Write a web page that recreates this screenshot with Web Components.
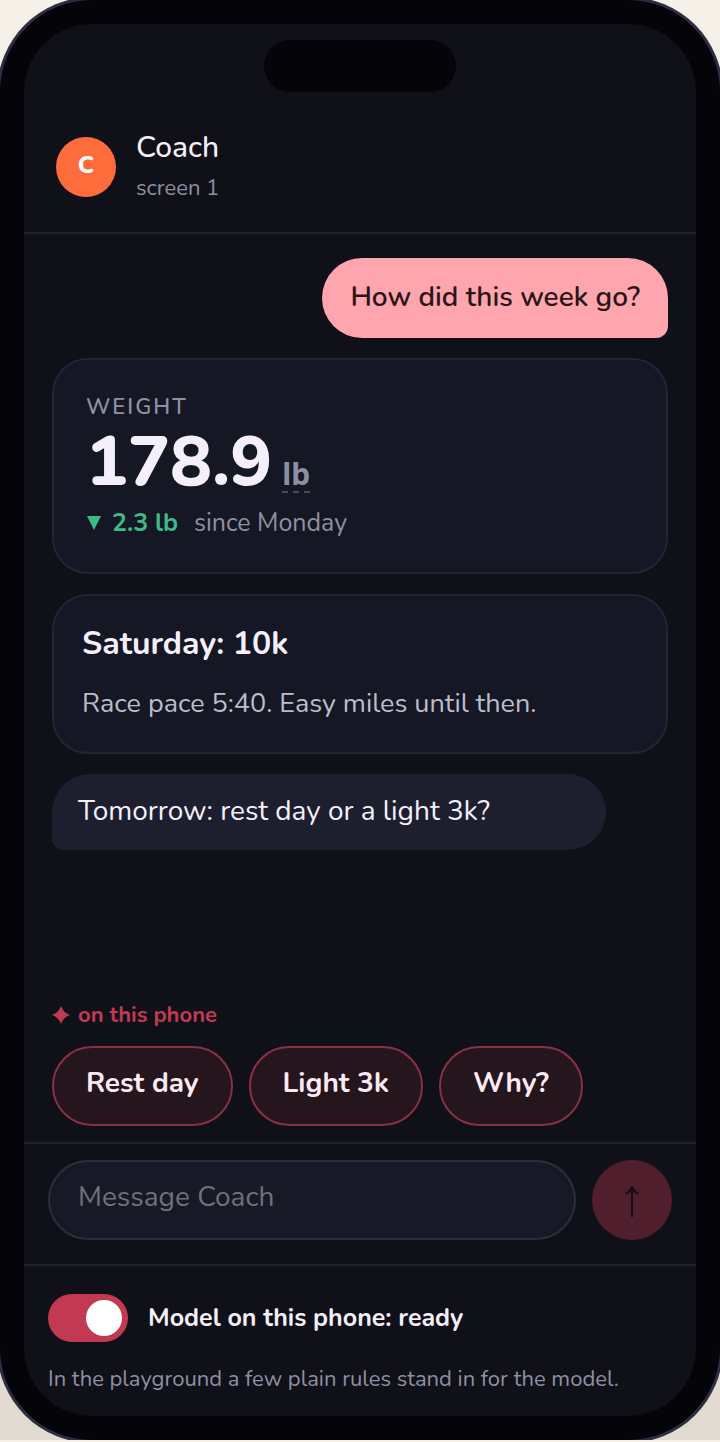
<!DOCTYPE html>
<html lang="en">
<head>
<meta charset="utf-8">
<meta name="viewport" content="width=device-width, initial-scale=1">
<title>Coach</title>
<style>
    :root {
        --bezel: #040409;
        --ring: #2f2d42;
        --screen: #101118;
        --line: #20212d;
        --card: #151725;
        --card-line: #232536;
        --bubble: #1d1e2e;
        --user: #ffa5ae;
        --accent: #c23a52;
        --text: #f4effa;
        --muted: #8f8fa2;
        --good: #3dba86;
    }

    body {
        margin: 0;
        background: linear-gradient(#f5f0e8, #e0dad1);
        color: var(--text);
        font-family: Nunito, Lato, "Noto Sans", sans-serif;
        font-size: 28px;
        line-height: 40px;
    }
</style>
</head>
<body>
<phone-frame>
    <chat-header slot="header" initial="C">
        Coach
        <span slot="status">screen 1</span>
    </chat-header>

    <chat-bubble from="user">How did this week go?</chat-bubble>
    <metric-card unit="lb">
        Weight
        <span slot="value">178.9</span>
        <span slot="delta">2.3 lb</span>
        <span slot="since">since Monday</span>
    </metric-card>
    <note-card>
        <span slot="title">Saturday: 10k</span>
        Race pace 5:40. Easy miles until then.
    </note-card>
    <chat-bubble from="coach">Tomorrow: rest day or a light 3k?</chat-bubble>

    <quick-replies slot="footer">
        <span slot="source">on this phone</span>
        <reply-chip>Rest day</reply-chip>
        <reply-chip>Light 3k</reply-chip>
        <reply-chip>Why?</reply-chip>
    </quick-replies>
    <message-composer slot="footer" placeholder="Message Coach"></message-composer>
    <model-switch slot="footer">
        Model on this phone: ready
        <span slot="note">In the playground a few plain rules stand in for the model.</span>
    </model-switch>
</phone-frame>

<script>
    // attach a shadow root filled with the given markup
    function render(el, html) {
        const template = document.createElement('template');
        template.innerHTML = html;
        el.attachShadow({ mode: 'open' }).appendChild(template.content.cloneNode(true));
    }

    class PhoneFrame extends HTMLElement {
        constructor() {
            super();
            render(this, `
                <style>
                    :host {
                        display: flex;
                        box-sizing: border-box;
                        min-height: calc(100vh - 2px);
                        padding: 24px;
                        background: var(--bezel);
                        border-radius: 92px;
                        box-shadow: 0 0 0 3px var(--ring);
                    }
                    .screen {
                        position: relative;
                        flex: 1;
                        display: flex;
                        flex-direction: column;
                        min-width: 0;
                        background: var(--screen);
                        border-radius: 68px;
                        overflow: hidden;
                    }
                    .island {
                        position: absolute;
                        top: 16px;
                        left: 50%;
                        width: 192px;
                        height: 52px;
                        margin-left: -96px;
                        border-radius: 26px;
                        background: var(--bezel);
                    }
                    main {
                        flex: 1;
                        display: flex;
                        flex-direction: column;
                        align-items: stretch;
                        gap: 20px;
                        padding: 24px 28px;
                    }
                </style>
                <div class="screen">
                    <div class="island"></div>
                    <slot name="header"></slot>
                    <main><slot></slot></main>
                    <slot name="footer"></slot>
                </div>
            `);
        }
    }

    class ChatHeader extends HTMLElement {
        constructor() {
            super();
            render(this, `
                <style>
                    :host { display: block; }
                    header {
                        display: flex;
                        align-items: center;
                        gap: 20px;
                        padding: 104px 32px 26px;
                        border-bottom: 2px solid var(--line);
                    }
                    .avatar {
                        width: 60px;
                        height: 60px;
                        border-radius: 50%;
                        background: #ff6c3c;
                        color: #fff;
                        font-size: 24px;
                        font-weight: 800;
                        line-height: 56px;
                        text-align: center;
                    }
                    .name {
                        font-size: 30px;
                        font-weight: 500;
                        line-height: 40px;
                    }
                    .status {
                        color: var(--muted);
                        font-size: 22px;
                        line-height: 40px;
                    }
                    .who { margin-bottom: -2px; }
                </style>
                <header>
                    <div class="avatar"></div>
                    <div class="who">
                        <div class="name"><slot></slot></div>
                        <div class="status"><slot name="status"></slot></div>
                    </div>
                </header>
            `);
        }

        connectedCallback() {
            this.shadowRoot.querySelector('.avatar').textContent = this.getAttribute('initial');
        }
    }

    class ChatBubble extends HTMLElement {
        constructor() {
            super();
            render(this, `
                <style>
                    :host {
                        display: block;
                        box-sizing: border-box;
                        max-width: 90%;
                        border-radius: 40px;
                        line-height: 38px;
                    }
                    :host([from="user"]) {
                        align-self: flex-end;
                        padding: 20px 28px 22px;
                        border-bottom-right-radius: 12px;
                        background: var(--user);
                        color: #2b1519;
                        font-weight: 600;
                    }
                    :host([from="coach"]) {
                        width: 90%;
                        padding: 18px 26px 20px;
                        border-bottom-left-radius: 12px;
                        background: var(--bubble);
                    }
                </style>
                <slot></slot>
            `);
        }
    }

    class MetricCard extends HTMLElement {
        constructor() {
            super();
            render(this, `
                <style>
                    :host {
                        display: block;
                        padding: 30px 32px 26px;
                        border: 2px solid var(--card-line);
                        border-radius: 36px;
                        background: var(--card);
                        color: var(--muted);
                    }
                    .label {
                        font-size: 22px;
                        font-weight: 600;
                        letter-spacing: 2px;
                        line-height: 34px;
                        text-transform: uppercase;
                    }
                    .reading {
                        display: flex;
                        align-items: baseline;
                        gap: 10px;
                        line-height: 76px;
                    }
                    .value {
                        color: var(--text);
                        font-size: 70px;
                        font-weight: 800;
                    }
                    .unit {
                        border-bottom: 2px dashed #474859;
                        font-family: "Noto Sans", sans-serif;
                        font-size: 30px;
                        font-weight: 700;
                        line-height: 34px;
                    }
                    .trend {
                        display: flex;
                        align-items: center;
                        font-size: 25px;
                        line-height: 46px;
                    }
                    svg { margin-right: 10px; }
                    .delta {
                        margin-right: 16px;
                        color: var(--good);
                        font-weight: 700;
                    }
                </style>
                <div class="label"><slot></slot></div>
                <div class="reading">
                    <span class="value"><slot name="value"></slot></span>
                    <span class="unit"></span>
                </div>
                <div class="trend">
                    <svg width="16" height="16" viewBox="0 0 16 16" fill="#3dba86" aria-hidden="true"><path d="M1 1h14L8 15z"/></svg>
                    <span class="delta"><slot name="delta"></slot></span>
                    <slot name="since"></slot>
                </div>
            `);
        }

        connectedCallback() {
            this.shadowRoot.querySelector('.unit').textContent = this.getAttribute('unit');
        }
    }

    class NoteCard extends HTMLElement {
        constructor() {
            super();
            render(this, `
                <style>
                    :host {
                        display: block;
                        padding: 26px 28px 28px;
                        border: 2px solid var(--card-line);
                        border-radius: 36px;
                        background: var(--card);
                    }
                    .title {
                        margin-bottom: 18px;
                        font-size: 32px;
                        font-weight: 700;
                        line-height: 44px;
                    }
                    .body {
                        color: #bdbccb;
                        font-size: 27px;
                    }
                </style>
                <div class="title"><slot name="title"></slot></div>
                <div class="body"><slot></slot></div>
            `);
        }
    }

    class QuickReplies extends HTMLElement {
        constructor() {
            super();
            render(this, `
                <style>
                    :host {
                        display: block;
                        padding: 0 28px 16px;
                    }
                    .source {
                        display: flex;
                        align-items: center;
                        gap: 8px;
                        margin-bottom: 14px;
                        color: var(--accent);
                        font-size: 22px;
                        font-weight: 700;
                        line-height: 34px;
                    }
                    .chips {
                        display: flex;
                        flex-wrap: wrap;
                        gap: 16px;
                    }
                </style>
                <div class="source">
                    <svg width="18" height="18" viewBox="0 0 18 18" fill="currentColor" aria-hidden="true"><path d="M9 0Q11.300 6.700 18 9Q11.300 11.300 9 18Q6.700 11.300 0 9Q6.700 6.700 9 0z"/></svg>
                    <slot name="source"></slot>
                </div>
                <div class="chips"><slot></slot></div>
            `);
        }
    }

    class ReplyChip extends HTMLElement {
        constructor() {
            super();
            render(this, `
                <style>
                    :host { display: block; }
                    button {
                        padding: 16px 32px 22px;
                        border: 2px solid #8d2f44;
                        border-radius: 40px;
                        background: #25151d;
                        color: #fbeaf3;
                        font: inherit;
                        font-weight: 700;
                        line-height: 38px;
                        cursor: pointer;
                    }
                </style>
                <button type="button"><slot></slot></button>
            `);
        }
    }

    class MessageComposer extends HTMLElement {
        constructor() {
            super();
            render(this, `
                <style>
                    :host { display: block; }
                    form {
                        display: flex;
                        gap: 16px;
                        padding: 16px 24px 24px;
                        border-top: 2px solid var(--line);
                    }
                    input {
                        flex: 1;
                        box-sizing: border-box;
                        min-width: 0;
                        height: 80px;
                        padding: 0 28px 6px;
                        border: 2px solid #2b2f3c;
                        border-radius: 40px;
                        background: #171a26;
                        color: var(--text);
                        font: inherit;
                    }
                    input::placeholder { color: #6f707b; opacity: 1; }
                    button {
                        display: flex;
                        align-items: center;
                        justify-content: center;
                        width: 80px;
                        height: 80px;
                        padding: 0;
                        border: 0;
                        border-radius: 50%;
                        background: var(--accent);
                        color: #000;
                    }
                    button:disabled {
                        background: #4f1f2e;
                        color: #161016;
                    }
                </style>
                <form>
                    <input type="text" name="message" autocomplete="off">
                    <button type="submit" aria-label="Send" disabled>
                        <svg width="16" height="34" viewBox="0 0 16 34" fill="currentColor" aria-hidden="true"><path d="M8 2Q10 7 15 10L14 12Q11 10.500 9 8V34H7V8Q5 10.500 2 12L1 10Q6 7 8 2z"/></svg>
                    </button>
                </form>
            `);
        }

        connectedCallback() {
            const input = this.shadowRoot.querySelector('input');
            const button = this.shadowRoot.querySelector('button');
            input.placeholder = this.getAttribute('placeholder');
            input.setAttribute('aria-label', input.placeholder);
            input.addEventListener('input', () => { button.disabled = !input.value.trim(); });
            this.shadowRoot.querySelector('form').addEventListener('submit', (e) => {
                e.preventDefault();
                input.value = '';
                button.disabled = true;
            });
        }
    }

    class ModelSwitch extends HTMLElement {
        constructor() {
            super();
            render(this, `
                <style>
                    :host {
                        display: block;
                        padding: 28px 24px 18px;
                        border-top: 2px solid var(--line);
                    }
                    .row {
                        display: flex;
                        align-items: center;
                        gap: 20px;
                    }
                    input {
                        appearance: none;
                        display: flex;
                        width: 80px;
                        height: 48px;
                        margin: 0;
                        padding: 6px;
                        box-sizing: border-box;
                        border-radius: 24px;
                        background: #3a3b4a;
                        cursor: pointer;
                    }
                    input::before {
                        content: "";
                        width: 36px;
                        height: 36px;
                        border-radius: 50%;
                        background: #fff;
                    }
                    input:checked {
                        justify-content: flex-end;
                        background: var(--accent);
                    }
                    label {
                        font-size: 25px;
                        font-weight: 700;
                        line-height: 48px;
                    }
                    .note {
                        margin-top: 18px;
                        color: var(--muted);
                        font-size: 22px;
                        line-height: 38px;
                    }
                </style>
                <div class="row">
                    <input type="checkbox" id="model" checked>
                    <label for="model"><slot></slot></label>
                </div>
                <div class="note"><slot name="note"></slot></div>
            `);
        }
    }

    customElements.define('phone-frame', PhoneFrame);
    customElements.define('chat-header', ChatHeader);
    customElements.define('chat-bubble', ChatBubble);
    customElements.define('metric-card', MetricCard);
    customElements.define('note-card', NoteCard);
    customElements.define('quick-replies', QuickReplies);
    customElements.define('reply-chip', ReplyChip);
    customElements.define('message-composer', MessageComposer);
    customElements.define('model-switch', ModelSwitch);
</script>
</body>
</html>
